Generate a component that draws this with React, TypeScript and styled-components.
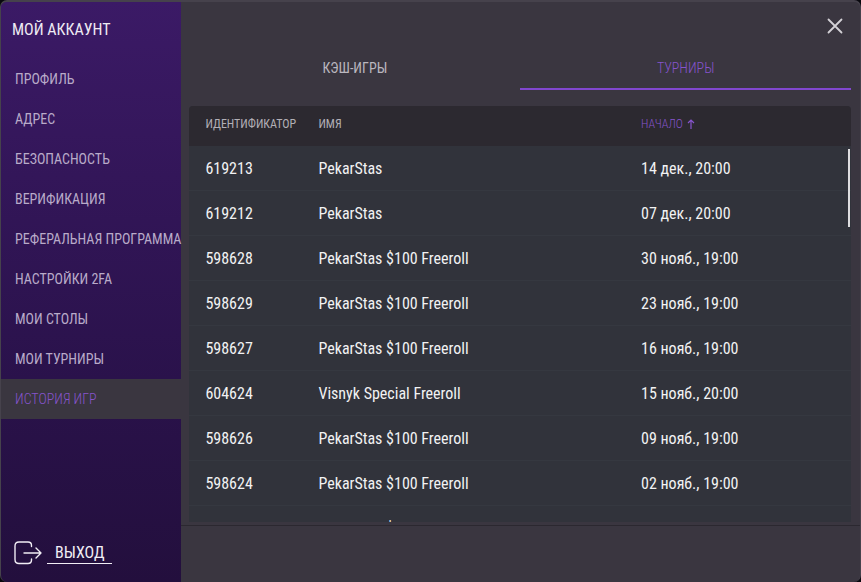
import React, { useState } from "react";
import styled, { createGlobalStyle } from "styled-components";

const GlobalStyle = createGlobalStyle`
  * { box-sizing: border-box; }
  body {
    margin: 0;
    background: #08070d;
    font-family: "Roboto Condensed", "Liberation Sans Narrow", Roboto, sans-serif;
  }
  button, a { font-family: inherit; }
`;

const Dialog = styled.div`
  display: flex;
  height: 100vh;
  overflow: hidden;
  background: #3a3640;
  border: 1px solid #46424c;
  border-top-width: 2px;
  border-bottom: 0;
  border-radius: 7px;
`;

const Sidebar = styled.aside`
  display: flex;
  flex-direction: column;
  flex: 0 0 180px;
  background: linear-gradient(#3b1a66, #331659 30%, #2a124b 65%, #230f3d);
`;

const Title = styled.h1`
  margin: 0;
  padding: 17px 11px 0;
  height: 57px;
  font-size: 16px;
  font-weight: 400;
  line-height: 22px;
  color: #eeeaf3;
`;

const Nav = styled.nav`
  display: flex;
  flex-direction: column;
`;

const NavLink = styled.a<{ $active: boolean }>`
  padding-left: 14px;
  font-size: 14px;
  font-weight: ${(p) => (p.$active ? 300 : 400)};
  line-height: 40px;
  white-space: nowrap;
  text-decoration: none;
  color: ${(p) => (p.$active ? "#8654cc" : "#b9abc9")};
  background: ${(p) => (p.$active ? "#3a3640" : "transparent")};
`;

const Logout = styled.button`
  display: flex;
  align-items: center;
  gap: 4px;
  margin: auto 0 17px 12px;
  padding: 0;
  border: 0;
  background: none;
  color: #f1edf5;
  cursor: pointer;
`;

const LogoutLabel = styled.span`
  padding: 0 7px 0 8px;
  border-bottom: 1px solid #f1edf5;
  font-size: 16px;
  line-height: 20px;
`;

const Main = styled.main`
  display: flex;
  flex-direction: column;
  flex: 1;
  min-width: 0;
`;

const TopBar = styled.header`
  display: flex;
  justify-content: flex-end;
  padding: 12px 13px 0;
  height: 44px;
`;

const CloseButton = styled.button`
  display: flex;
  width: 24px;
  height: 24px;
  padding: 0;
  border: 0;
  background: none;
  color: #d3d1d6;
  cursor: pointer;
`;

const Tabs = styled.div`
  display: flex;
  margin: 0 9px 16px 8px;
`;

const Tab = styled.button<{ $active: boolean }>`
  flex: 1;
  height: 44px;
  padding: 2px 0 0;
  border: 0;
  border-bottom: 2px solid ${(p) => (p.$active ? "#8147cf" : "transparent")};
  background: none;
  font-size: 14px;
  font-weight: ${(p) => (p.$active ? 300 : 400)};
  color: ${(p) => (p.$active ? "#8654cc" : "#bab7bf")};
  cursor: pointer;
`;

const History = styled.section`
  position: relative;
  flex: 1;
  min-height: 0;
  margin: 0 9px 3px 8px;
  border-radius: 4px 4px 0 0;
  overflow: hidden;
  background: #31333b;
`;

const Scroller = styled.div`
  height: 100%;
  overflow-y: auto;
  scrollbar-width: none;
`;

const Thumb = styled.div`
  position: absolute;
  top: 43px;
  right: 1px;
  width: 2px;
  height: 78px;
  background: #dedee0;
`;

const Table = styled.table`
  width: 100%;
  table-layout: fixed;
  border-collapse: separate;
  border-spacing: 0;
  text-align: left;
  white-space: nowrap;
`;

const HeadCell = styled.th<{ $width?: number; $sorted?: boolean }>`
  position: sticky;
  top: 0;
  width: ${(p) => (p.$width ? `${p.$width}px` : "auto")};
  height: 40px;
  padding: 0 0 4px 16px;
  background: #2c2930;
  font-size: 12px;
  font-weight: ${(p) => (p.$sorted ? 300 : 400)};
  color: ${(p) => (p.$sorted ? "#8654cc" : "#b2afb6")};
`;

const SortButton = styled.button`
  display: flex;
  align-items: center;
  gap: 4px;
  padding: 0;
  border: 0;
  background: none;
  font-size: inherit;
  font-weight: inherit;
  color: inherit;
  cursor: pointer;
`;

const Cell = styled.td`
  height: 45px;
  padding: 0 0 0 16px;
  border-bottom: 1px solid #353840;
  font-size: 16px;
  color: #f2f2f3;
`;

const Footer = styled.footer`
  height: 57px;
  border-top: 1px solid #2b2830;
`;

const sections = [
  "ПРОФИЛЬ",
  "АДРЕС",
  "БЕЗОПАСНОСТЬ",
  "ВЕРИФИКАЦИЯ",
  "РЕФЕРАЛЬНАЯ ПРОГРАММА",
  "НАСТРОЙКИ 2FA",
  "МОИ СТОЛЫ",
  "МОИ ТУРНИРЫ",
  "ИСТОРИЯ ИГР",
];

const tabs = ["КЭШ-ИГРЫ", "ТУРНИРЫ"];

const games = [
  ["619213", "PekarStas", "14 дек., 20:00"],
  ["619212", "PekarStas", "07 дек., 20:00"],
  ["598628", "PekarStas $100 Freeroll", "30 нояб., 19:00"],
  ["598629", "PekarStas $100 Freeroll", "23 нояб., 19:00"],
  ["598627", "PekarStas $100 Freeroll", "16 нояб., 19:00"],
  ["604624", "Visnyk Special Freeroll", "15 нояб., 20:00"],
  ["598626", "PekarStas $100 Freeroll", "09 нояб., 19:00"],
  ["598624", "PekarStas $100 Freeroll", "02 нояб., 19:00"],
  ["598625", "PekarStas $100 Freeroll", "26 окт., 19:00"],
];

const LogoutIcon = () => (
  <svg width="30" height="24" viewBox="0 0 30 24" fill="none" stroke="currentColor" strokeWidth="1.4" strokeLinecap="round" strokeLinejoin="round" aria-hidden="true">
    <path d="M18.5 5.5V4.5Q18.5 1 15 1H6Q2 1 2 5V18.5Q2 22.5 6 22.5H15Q18.5 22.5 18.5 19V18" />
    <path d="M11 12H28M23 7L28 12L23 17" />
  </svg>
);

const CloseIcon = () => (
  <svg width="24" height="24" viewBox="0 0 24 24" stroke="currentColor" strokeWidth="1.8" strokeLinecap="round" aria-hidden="true">
    <path d="M5.5 5.5L18.5 18.5M18.5 5.5L5.5 18.5" />
  </svg>
);

const SortIcon = () => (
  <svg width="8" height="10" viewBox="0 0 8 10" fill="none" stroke="currentColor" strokeWidth="1.2" aria-hidden="true">
    <path d="M4 10V1M1 4L4 1L7 4" />
  </svg>
);

export default function App() {
  const [section, setSection] = useState("ИСТОРИЯ ИГР");
  const [tab, setTab] = useState("ТУРНИРЫ");

  return (
    <>
      <GlobalStyle />
      <Dialog role="dialog" aria-labelledby="account-title">
        <Sidebar>
          <Title id="account-title">МОЙ АККАУНТ</Title>
          <Nav>
            {sections.map((name) => (
              <NavLink key={name} href="#" $active={name === section} onClick={() => setSection(name)}>
                {name}
              </NavLink>
            ))}
          </Nav>
          <Logout type="button">
            <LogoutIcon />
            <LogoutLabel>ВЫХОД</LogoutLabel>
          </Logout>
        </Sidebar>
        <Main>
          <TopBar>
            <CloseButton type="button" aria-label="Закрыть">
              <CloseIcon />
            </CloseButton>
          </TopBar>
          <Tabs role="tablist">
            {tabs.map((name) => (
              <Tab key={name} type="button" role="tab" aria-selected={name === tab} $active={name === tab} onClick={() => setTab(name)}>
                {name}
              </Tab>
            ))}
          </Tabs>
          <History>
            <Scroller>
              <Table>
                <thead>
                  <tr>
                    <HeadCell $width={113}>ИДЕНТИФИКАТОР</HeadCell>
                    <HeadCell>ИМЯ</HeadCell>
                    <HeadCell $width={226} $sorted aria-sort="ascending">
                      <SortButton type="button">
                        НАЧАЛО <SortIcon />
                      </SortButton>
                    </HeadCell>
                  </tr>
                </thead>
                <tbody>
                  {games.map(([id, name, start]) => (
                    <tr key={id}>
                      <Cell>{id}</Cell>
                      <Cell>{name}</Cell>
                      <Cell>{start}</Cell>
                    </tr>
                  ))}
                </tbody>
              </Table>
            </Scroller>
            <Thumb />
          </History>
          <Footer />
        </Main>
      </Dialog>
    </>
  );
}
